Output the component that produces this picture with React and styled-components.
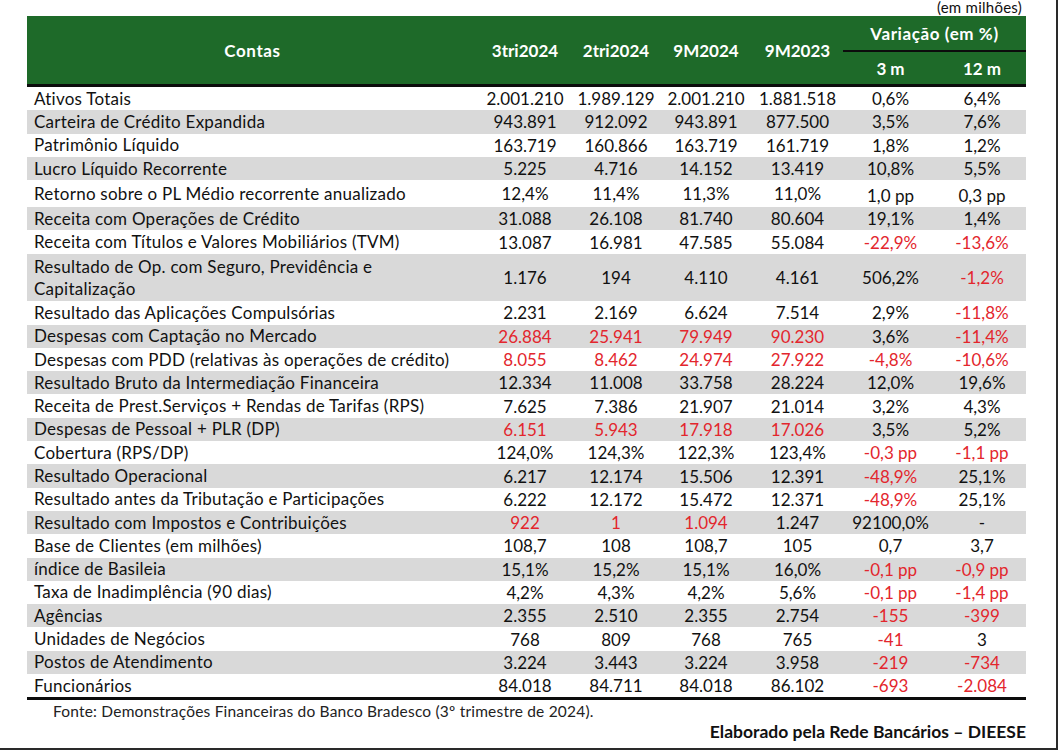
import React from 'react';
import styled, { createGlobalStyle } from 'styled-components';

const GlobalStyle = createGlobalStyle`
  html, body {
    margin: 0;
    padding: 0;
    background: #ffffff;
  }
  body {
    font-family: Lato, "Open Sans", "Liberation Sans", sans-serif;
    color: #111111;
  }
`;

const COLS = '451px 94px 88px 92px 91px 95px 88px';

const Page = styled.div`
  width: 1058px;
  height: 750px;
  box-sizing: border-box;
  border-right: 2px solid #2a2a2a;
  border-bottom: 2px solid #2a2a2a;
  overflow: hidden;
  padding-left: 27px;
`;

const Frame = styled.div`
  width: 999px;
`;

const Unit = styled.div`
  height: 16px;
  line-height: 15px;
  font-size: 15px;
  text-align: right;
  padding-right: 4px;
  letter-spacing: 0.25px;
`;

const Head = styled.div`
  display: grid;
  grid-template-columns: ${COLS};
  grid-template-rows: 34px 2px 32px;
  background: #1e6a29;
  border-bottom: 3px solid #0c0c0c;
  color: #ffffff;
  font-weight: 700;
  font-size: 17px;
`;

const HeadCell = styled.div`
  display: flex;
  align-items: center;
  justify-content: center;
  grid-row: ${(p) => p.$row || '1 / 4'};
  grid-column: ${(p) => p.$col || 'auto'};
  letter-spacing: ${(p) => (p.$wide ? 0.6 : 0)}px;
`;

const HeadRule = styled.div`
  grid-row: 2;
  grid-column: 6 / 8;
  background: #0c0c0c;
`;

const Row = styled.div`
  display: grid;
  grid-template-columns: ${COLS};
  height: ${(p) => p.$h || 23.3}px;
  background: ${(p) => (p.$shade ? '#d9d9d9' : '#ffffff')};
  font-size: 17px;
`;

const Label = styled.div`
  display: flex;
  align-items: center;
  padding-left: 7px;
  line-height: 22px;
  letter-spacing: 0.25px;
  white-space: nowrap;
`;

const Value = styled.div`
  display: flex;
  align-items: center;
  justify-content: center;
  color: ${(p) => (p.$neg ? '#e3262d' : '#111111')};
  padding-top: ${(p) => (p.$low ? 4 : 0)}px;
`;

const BottomRule = styled.div`
  height: 3px;
  background: #0c0c0c;
`;

const Source = styled.div`
  padding-left: 26px;
  line-height: 22px;
  font-size: 15.5px;
  letter-spacing: 0.2px;
  color: #222222;
`;

const Credit = styled.div`
  text-align: right;
  font-weight: 700;
  font-size: 17.5px;
  line-height: 20px;
`;

const rows = [
  ['Ativos Totais', ['2.001.210', '1.989.129', '2.001.210', '1.881.518', '0,6%', '6,4%'], '000000'],
  ['Carteira de Crédito Expandida', ['943.891', '912.092', '943.891', '877.500', '3,5%', '7,6%'], '000000'],
  ['Patrimônio Líquido', ['163.719', '160.866', '163.719', '161.719', '1,8%', '1,2%'], '000000'],
  ['Lucro Líquido Recorrente', ['5.225', '4.716', '14.152', '13.419', '10,8%', '5,5%'], '000000'],
  ['Retorno sobre o PL Médio recorrente anualizado', ['12,4%', '11,4%', '11,3%', '11,0%', '1,0 pp', '0,3 pp'], '000000', 27],
  ['Receita com Operações de Crédito', ['31.088', '26.108', '81.740', '80.604', '19,1%', '1,4%'], '000000'],
  ['Receita com Títulos e Valores Mobiliários (TVM)', ['13.087', '16.981', '47.585', '55.084', '-22,9%', '-13,6%'], '000011'],
  [['Resultado de Op. com Seguro, Previdência e', 'Capitalização'], ['1.176', '194', '4.110', '4.161', '506,2%', '-1,2%'], '000001', 47.5],
  ['Resultado das Aplicações Compulsórias', ['2.231', '2.169', '6.624', '7.514', '2,9%', '-11,8%'], '000001'],
  ['Despesas com Captação no Mercado', ['26.884', '25.941', '79.949', '90.230', '3,6%', '-11,4%'], '111101'],
  ['Despesas com PDD (relativas às operações de crédito)', ['8.055', '8.462', '24.974', '27.922', '-4,8%', '-10,6%'], '111111'],
  ['Resultado Bruto da Intermediação Financeira', ['12.334', '11.008', '33.758', '28.224', '12,0%', '19,6%'], '000000'],
  ['Receita de Prest.Serviços + Rendas de Tarifas (RPS)', ['7.625', '7.386', '21.907', '21.014', '3,2%', '4,3%'], '000000'],
  ['Despesas de Pessoal + PLR (DP)', ['6.151', '5.943', '17.918', '17.026', '3,5%', '5,2%'], '111100'],
  ['Cobertura (RPS/DP)', ['124,0%', '124,3%', '122,3%', '123,4%', '-0,3 pp', '-1,1 pp'], '000011'],
  ['Resultado Operacional', ['6.217', '12.174', '15.506', '12.391', '-48,9%', '25,1%'], '000010'],
  ['Resultado antes da Tributação e Participações', ['6.222', '12.172', '15.472', '12.371', '-48,9%', '25,1%'], '000010'],
  ['Resultado com Impostos e Contribuições', ['922', '1', '1.094', '1.247', '92100,0%', '-'], '111000'],
  ['Base de Clientes (em milhões)', ['108,7', '108', '108,7', '105', '0,7', '3,7'], '000000'],
  ['índice de Basileia', ['15,1%', '15,2%', '15,1%', '16,0%', '-0,1 pp', '-0,9 pp'], '000011'],
  ['Taxa de Inadimplência (90 dias)', ['4,2%', '4,3%', '4,2%', '5,6%', '-0,1 pp', '-1,4 pp'], '000011'],
  ['Agências', ['2.355', '2.510', '2.355', '2.754', '-155', '-399'], '000011'],
  ['Unidades de Negócios', ['768', '809', '768', '765', '-41', '3'], '000010'],
  ['Postos de Atendimento', ['3.224', '3.443', '3.224', '3.958', '-219', '-734'], '000011'],
  ['Funcionários', ['84.018', '84.711', '84.018', '86.102', '-693', '-2.084'], '000011'],
];

export default function App() {
  return (
    <Page>
      <GlobalStyle />
      <Frame>
        <Unit>(em milhões)</Unit>
        <Head>
          <HeadCell $col="1" $wide>Contas</HeadCell>
          <HeadCell $col="2">3tri2024</HeadCell>
          <HeadCell $col="3">2tri2024</HeadCell>
          <HeadCell $col="4">9M2024</HeadCell>
          <HeadCell $col="5">9M2023</HeadCell>
          <HeadCell $col="6 / 8" $row="1" $wide>Variação (em %)</HeadCell>
          <HeadRule />
          <HeadCell $col="6" $row="3">3 m</HeadCell>
          <HeadCell $col="7" $row="3">12 m</HeadCell>
        </Head>
        {rows.map(([label, values, neg, h], i) => (
          <Row key={i} $shade={i % 2 === 1} $h={h}>
            <Label>
              {Array.isArray(label) ? (
                <span>
                  {label[0]}
                  <br />
                  {label[1]}
                </span>
              ) : (
                label
              )}
            </Label>
            {values.map((v, j) => (
              <Value key={j} $neg={neg[j] === '1'} $low={h === 27 && j > 3}>
                {v}
              </Value>
            ))}
          </Row>
        ))}
        <BottomRule />
        <Source>Fonte: Demonstrações Financeiras do Banco Bradesco (3º trimestre de 2024).</Source>
        <Credit>Elaborado pela Rede Bancários – DIEESE</Credit>
      </Frame>
    </Page>
  );
}
